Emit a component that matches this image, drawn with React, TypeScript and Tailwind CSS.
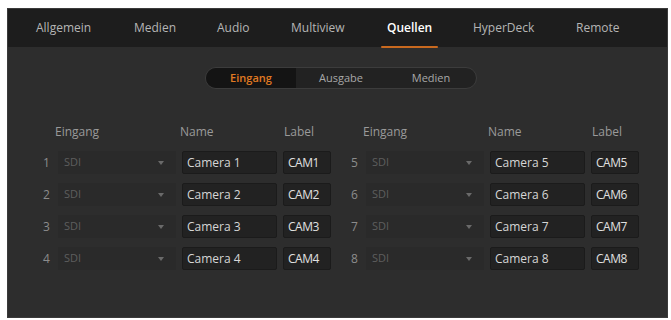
const tabs = [
    { label: 'Allgemein', w: 'w-[98px]' },
    { label: 'Medien', w: 'w-[83px]' },
    { label: 'Audio', w: 'w-[74px]' },
    { label: 'Multiview', w: 'w-[96px]' },
    { label: 'Quellen', w: 'w-[86px]' },
    { label: 'HyperDeck', w: 'w-[103px]' },
    { label: 'Remote', w: 'w-[80px]' },
]
const segments = ['Eingang', 'Ausgabe', 'Medien']

function SourceRow({ n }: { n: number }) {
    return (
        <div className="flex items-center h-[23px]">
            <span className="w-[18px] pl-[3px] text-[#8c8c8c]">{n}</span>
            <div className="w-[118px] h-full flex items-center justify-between pl-[6px] pr-[12px] bg-[#2a2a2a]">
                <span className="text-[#5e5e5e] text-[11px]">SDI</span>
                <svg width="6" height="4" viewBox="0 0 6 4">
                    <path d="M0 0 L6 0 L3 4 Z" fill="#6a6a6a" />
                </svg>
            </div>
            <div className="ml-[6px] w-[95px] h-full flex items-center pl-[4px] bg-[#222222] border border-[#1b1b1b] rounded-[2px] text-[#d6d6d6]">
                Camera {n}
            </div>
            <div className="ml-[6px] w-[48px] h-full flex items-center pl-[4px] bg-[#222222] border border-[#1b1b1b] rounded-[2px] text-[#e0e0e0] tracking-[-0.5px]">
                CAM{n}
            </div>
        </div>
    )
}

function Group({ start }: { start: number }) {
    return (
        <div className="w-[307px] flex flex-col">
            <div className="flex items-center h-[20px] text-[#9a9a9a]">
                <span className="w-[133px] pl-[15px]">Eingang</span>
                <span className="w-[104px] pl-[7px]">Name</span>
                <span className="pl-[7px]">Label</span>
            </div>
            <div className="flex flex-col gap-[9px] mt-[9px]">
                {[0, 1, 2, 3].map((i) => (
                    <SourceRow key={i} n={start + i} />
                ))}
            </div>
        </div>
    )
}

export default function App() {
    return (
        <div className="w-[671px] h-[320px] bg-white pt-[8px] pl-[7px] font-['Open_Sans',sans-serif] text-[12px]">
            <div className="w-[661px] h-[310px] bg-[#2d2d2d] border border-[#3a3a3a] flex flex-col">
                {/* tab bar */}
                <div className="h-[38px] bg-[#1d1d1d] flex items-center pl-[28px] shrink-0">
                    {tabs.map((t) => (
                        <div key={t.label} className={t.w + ' h-full flex items-center'}>
                            <div
                                className={
                                    t.label === 'Quellen'
                                        ? 'relative h-full flex items-center text-white font-semibold'
                                        : 'relative h-full flex items-center text-[#b5b5b5]'
                                }
                            >
                                {t.label}
                                {t.label === 'Quellen' && (
                                    <div className="absolute bottom-[-1px] left-[-6px] right-[-6px] h-[2px] bg-[#c8691f] rounded-full" />
                                )}
                            </div>
                        </div>
                    ))}
                </div>

                {/* segmented control */}
                <div className="flex pl-[197px] mt-[20px]">
                    <div className="flex h-[22px] rounded-full bg-[#222222] border border-[#3c3c3c] overflow-hidden">
                        {segments.map((s) => (
                            <div
                                key={s}
                                className={
                                    s === 'Eingang'
                                        ? 'w-[90px] flex items-center justify-center bg-[#141414] text-[#e07a22] text-[11px] font-semibold'
                                        : 'w-[90px] flex items-center justify-center text-[#a8a8a8] text-[11px]'
                                }
                            >
                                {s}
                            </div>
                        ))}
                    </div>
                </div>

                {/* sources grid */}
                <div className="flex pl-[32px] mt-[33px] gap-[1px]">
                    <Group start={1} />
                    <Group start={5} />
                </div>
            </div>
        </div>
    )
}
